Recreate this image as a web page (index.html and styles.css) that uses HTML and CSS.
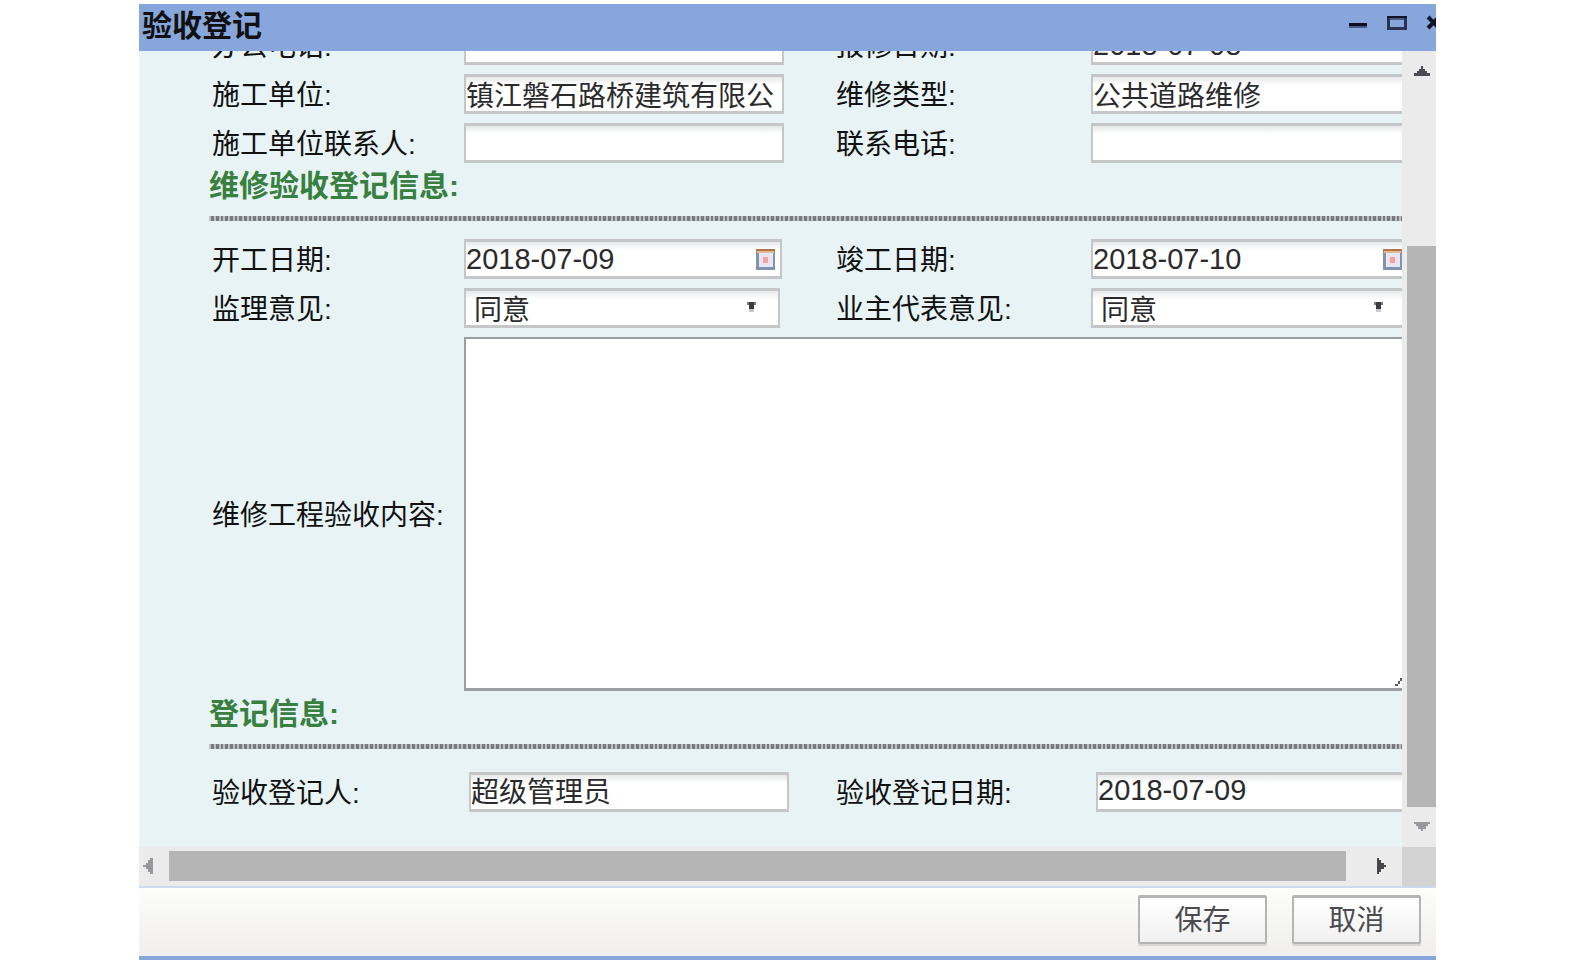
FILE: index.html
```html
<!DOCTYPE html>
<html lang="zh-CN">
<head>
<meta charset="utf-8">
<title>验收登记</title>
<link rel="stylesheet" href="styles.css">
</head>
<body>
<main class="dialog">
  <header class="titlebar">
    <h1 class="dialog-title">验收登记</h1>
    <div class="window-tools">
      <button type="button" class="tool" aria-label="最小化"><svg width="20" height="16" viewBox="0 0 20 16"><path d="M1 8h18v5H1z" fill="#4b5a85"/><path d="M1 8h18v3H1z" fill="#0c0f20"/></svg></button>
      <button type="button" class="tool" aria-label="最大化"><svg width="20" height="16" viewBox="0 0 20 16"><path d="M1.500 2.500h17v11h-17z" fill="none" stroke="#2b3355" stroke-width="3"/><path d="M0 1h20v2H0z" fill="#11152a"/><path d="M3 3h14v2H3z" fill="#4b5a85"/></svg></button>
      <button type="button" class="tool" aria-label="关闭"><svg width="20" height="16" viewBox="0 0 20 16"><path d="M2 2l11 11M13 2L2 13" stroke="#11152a" stroke-width="4" fill="none"/></svg></button>
    </div>
  </header>

  <div class="body">
    <div class="viewport">
      <form class="form" id="acceptance">
        <div class="grid">
          <label class="label" for="office">办公电话:</label>
          <div class="field"><input class="input" id="office" type="text"></div>
          <label class="label" for="repair-date">报修日期:</label>
          <div class="field"><input class="input date" id="repair-date" type="text" value="2018-07-08"></div>

          <label class="label" for="unit">施工单位:</label>
          <div class="field"><input class="input" id="unit" type="text" value="镇江磐石路桥建筑有限公"></div>
          <label class="label" for="type">维修类型:</label>
          <div class="field"><input class="input" id="type" type="text" value="公共道路维修"></div>

          <label class="label" for="contact">施工单位联系人:</label>
          <div class="field"><input class="input" id="contact" type="text"></div>
          <label class="label" for="phone">联系电话:</label>
          <div class="field"><input class="input" id="phone" type="text"></div>
        </div>

        <h2 class="section">维修验收登记信息:</h2>
        <div class="grid">
          <label class="label" for="start">开工日期:</label>
          <div class="field picker">
            <input class="input date" id="start" type="text" value="2018-07-09">
            <button type="button" class="calendar" aria-label="选择开工日期"><svg width="19" height="21" viewBox="0 0 19 21"><path d="M0 0h19v21H0z" fill="#8493ac"/><path d="M3 3h14v15H3z" fill="#e3eaf7"/><path d="M5 6h9v10H5z" fill="#f2dfe9"/><path d="M7 8h5v6H7z" fill="#f0a3a3"/><path d="M0 0h19v2H0z" fill="#b17445"/><path d="M1 2h17v2H1z" fill="#e6b795"/></svg></button>
          </div>
          <label class="label" for="finish">竣工日期:</label>
          <div class="field picker">
            <input class="input date" id="finish" type="text" value="2018-07-10">
            <button type="button" class="calendar" aria-label="选择竣工日期"><svg width="19" height="21" viewBox="0 0 19 21"><path d="M0 0h19v21H0z" fill="#8493ac"/><path d="M3 3h14v15H3z" fill="#e3eaf7"/><path d="M5 6h9v10H5z" fill="#f2dfe9"/><path d="M7 8h5v6H7z" fill="#f0a3a3"/><path d="M0 0h19v2H0z" fill="#b17445"/><path d="M1 2h17v2H1z" fill="#e6b795"/></svg></button>
          </div>

          <label class="label" for="supervisor">监理意见:</label>
          <div class="field choice">
            <select class="input" id="supervisor"><option>同意</option></select>
            <svg class="caret" width="9" height="10" viewBox="0 0 9 10"><path d="M0 0h9v3H7v4H2V3H0z" fill="#3a3b40"/><path d="M0 0h2v3H0zM7 0h2v3H7z" fill="#7b7c80"/><path d="M2 7h5v3H2z" fill="#c9c9cb"/></svg>
          </div>
          <label class="label" for="owner">业主代表意见:</label>
          <div class="field choice">
            <select class="input" id="owner"><option>同意</option></select>
            <svg class="caret" width="9" height="10" viewBox="0 0 9 10"><path d="M0 0h9v3H7v4H2V3H0z" fill="#3a3b40"/><path d="M0 0h2v3H0zM7 0h2v3H7z" fill="#7b7c80"/><path d="M2 7h5v3H2z" fill="#c9c9cb"/></svg>
          </div>

          <label class="label" for="content">维修工程验收内容:</label>
          <div class="wide">
            <textarea class="textarea" id="content"></textarea>
            <svg class="grip" width="15" height="15" viewBox="0 0 15 15"><path d="M0 13h3v-3h2V7h3V4h2V2h3V0h2v2h-2v2h-3v3H8v3H5v3H3v2H0z" fill="#5a5b5e"/></svg>
          </div>
        </div>

        <h2 class="section">登记信息:</h2>
        <div class="grid">
          <label class="label" for="registrar">验收登记人:</label>
          <div class="field inset"><input class="input" id="registrar" type="text" value="超级管理员"></div>
          <label class="label" for="register-date">验收登记日期:</label>
          <div class="field inset"><input class="input date" id="register-date" type="text" value="2018-07-09"></div>
        </div>
      </form>
    </div>

    <div class="vscroll">
      <svg class="arrow" width="16" height="10" viewBox="0 0 16 10"><path d="M7 0h2v3h2v2h2v2h3v3H0V7h3V5h2V3h2z" fill="#4a4b50"/></svg>
      <div class="vthumb"></div>
      <svg class="arrow" width="16" height="9" viewBox="0 0 16 9"><path d="M0 0h16v2h-2v2h-2v3H9v2H7V7H4V4H2V2H0z" fill="#97989c"/></svg>
    </div>
    <div class="hscroll">
      <svg class="arrow" width="10" height="16" viewBox="0 0 10 16"><path d="M10 0H7v2H5v3H3v2H0v2h3v2h2v3h2v2h3z" fill="#97989c"/></svg>
      <div class="hthumb"></div>
      <svg class="arrow" width="9" height="16" viewBox="0 0 9 16"><path d="M0 0h2v2h2v3h3v2h2v2H7v2H4v3H2v2H0z" fill="#45464b"/></svg>
    </div>
    <div class="corner"></div>
  </div>

  <footer class="footer">
    <button type="submit" form="acceptance" class="button">保存</button>
    <button type="button" class="button">取消</button>
  </footer>
</main>
</body>
</html>
```
FILE: styles.css
```css
* {
  box-sizing: border-box;
}

body {
  margin: 0;
  padding: 4px 139px 5px;
  background: #fff;
  color: #111;
  font: 28px "Liberation Sans", "Noto Sans CJK SC", sans-serif;
}

h1,
h2 {
  margin: 0;
}

button {
  font: inherit;
  padding: 0;
}

.dialog {
  overflow: hidden;
  border-bottom: 4px solid #87a7dc;
}

.titlebar {
  display: flex;
  justify-content: space-between;
  height: 47px;
  padding-left: 3px;
  background: #87a7dc;
}

.dialog-title {
  font-size: 30px;
  line-height: 44px;
}

.window-tools {
  display: flex;
  gap: 19px;
  align-items: flex-start;
  padding-top: 11px;
  margin-right: -10px;
}

.tool {
  border: 0;
  background: none;
  line-height: 0;
}

.body {
  display: grid;
  grid-template-columns: minmax(0, 1fr) 34px;
  grid-template-rows: auto 39px;
}

.viewport {
  overflow: hidden;
  background: #e7f3f5;
}

/* The form is shown scrolled: its first row sits partly above the viewport. */
.form {
  margin-top: -26px;
  padding: 0 0 35px 70px;
}

.grid {
  display: grid;
  grid-template-columns: 255px minmax(0, 1fr) 258px 311px;
  row-gap: 9px;
}

.label {
  align-self: center;
  padding: 4px 0 0 3px;
  line-height: 36px;
  white-space: nowrap;
}

.field {
  position: relative;
  width: 320px;
}

.picker {
  width: 318px;
}

.choice {
  width: 316px;
}

.inset {
  margin-left: 5px;
}

.input {
  display: block;
  width: 100%;
  height: 40px;
  margin: 0;
  padding: 0;
  border: solid #c5c6c8;
  border-width: 3px 2px;
  border-radius: 0;
  outline: 0;
  background: linear-gradient(#e6e8e9, #fff 8px);
  color: #2b2b2d;
  font: inherit;
}

.date {
  font-size: 29px;
}

.inset .input {
  padding-bottom: 4px;
}

select.input {
  appearance: none;
  padding: 4px 0 0 8px;
}

.calendar {
  position: absolute;
  top: 10px;
  right: 7px;
  border: 0;
  background: none;
  line-height: 0;
}

.caret {
  position: absolute;
  top: 14px;
  right: 24px;
  pointer-events: none;
}

.wide {
  position: relative;
  grid-column: 2 / -1;
  margin-right: -12px;
}

.textarea {
  display: block;
  width: 100%;
  height: 354px;
  padding: 4px;
  border: solid #9b9ea0;
  border-width: 2px 2px 3px;
  outline: 0;
  background: #fff;
  font: inherit;
  resize: none;
}

.grip {
  position: absolute;
  right: 4px;
  bottom: 5px;
  pointer-events: none;
}

.section {
  margin-bottom: 18px;
  padding-bottom: 12px;
  color: #37803f;
  font-size: 30px;
  line-height: 46px;
  background: repeating-linear-gradient(90deg, #bcc0c3 0 2px, #777a80 2px 5px, #bcc0c3 5px 7px, #777a80 7px 10px, #bcc0c3 10px 12px, #777a80 12px 14px) bottom / 100% 5px no-repeat;
}

.section + .grid:last-child {
  padding-top: 5px;
}

.vscroll {
  display: grid;
  grid-template-rows: 195px 1fr 40px;
  padding-left: 5px;
  background: #ebebeb;
}

.vthumb,
.hthumb {
  background: #b5b5b5;
}

.vscroll .arrow {
  margin: 15px 0 0 7px;
}

.hscroll {
  display: grid;
  grid-template-columns: 30px 1fr 56px;
  padding: 4px 0 5px;
  background: #ebebeb;
}

.hscroll .arrow {
  margin: 7px 0 0 4px;
}

.hscroll .arrow:last-child {
  margin-left: 31px;
}

.corner {
  background: #d3d3d3;
}

.footer {
  display: flex;
  justify-content: flex-end;
  gap: 25px;
  height: 70px;
  padding: 7px 15px 0 0;
  border-top: 2px solid #cbdaec;
  background: linear-gradient(#fdfdfc, #efeeed);
}

.button {
  width: 129px;
  height: 49px;
  padding-bottom: 4px;
  border: 2px solid #b3b4b6;
  border-top-width: 3px;
  border-radius: 2px;
  background: linear-gradient(#fff, #f0f0f0);
  box-shadow: 0 2px 0 #d7d7d7;
  color: #4b4b50;
}
```
